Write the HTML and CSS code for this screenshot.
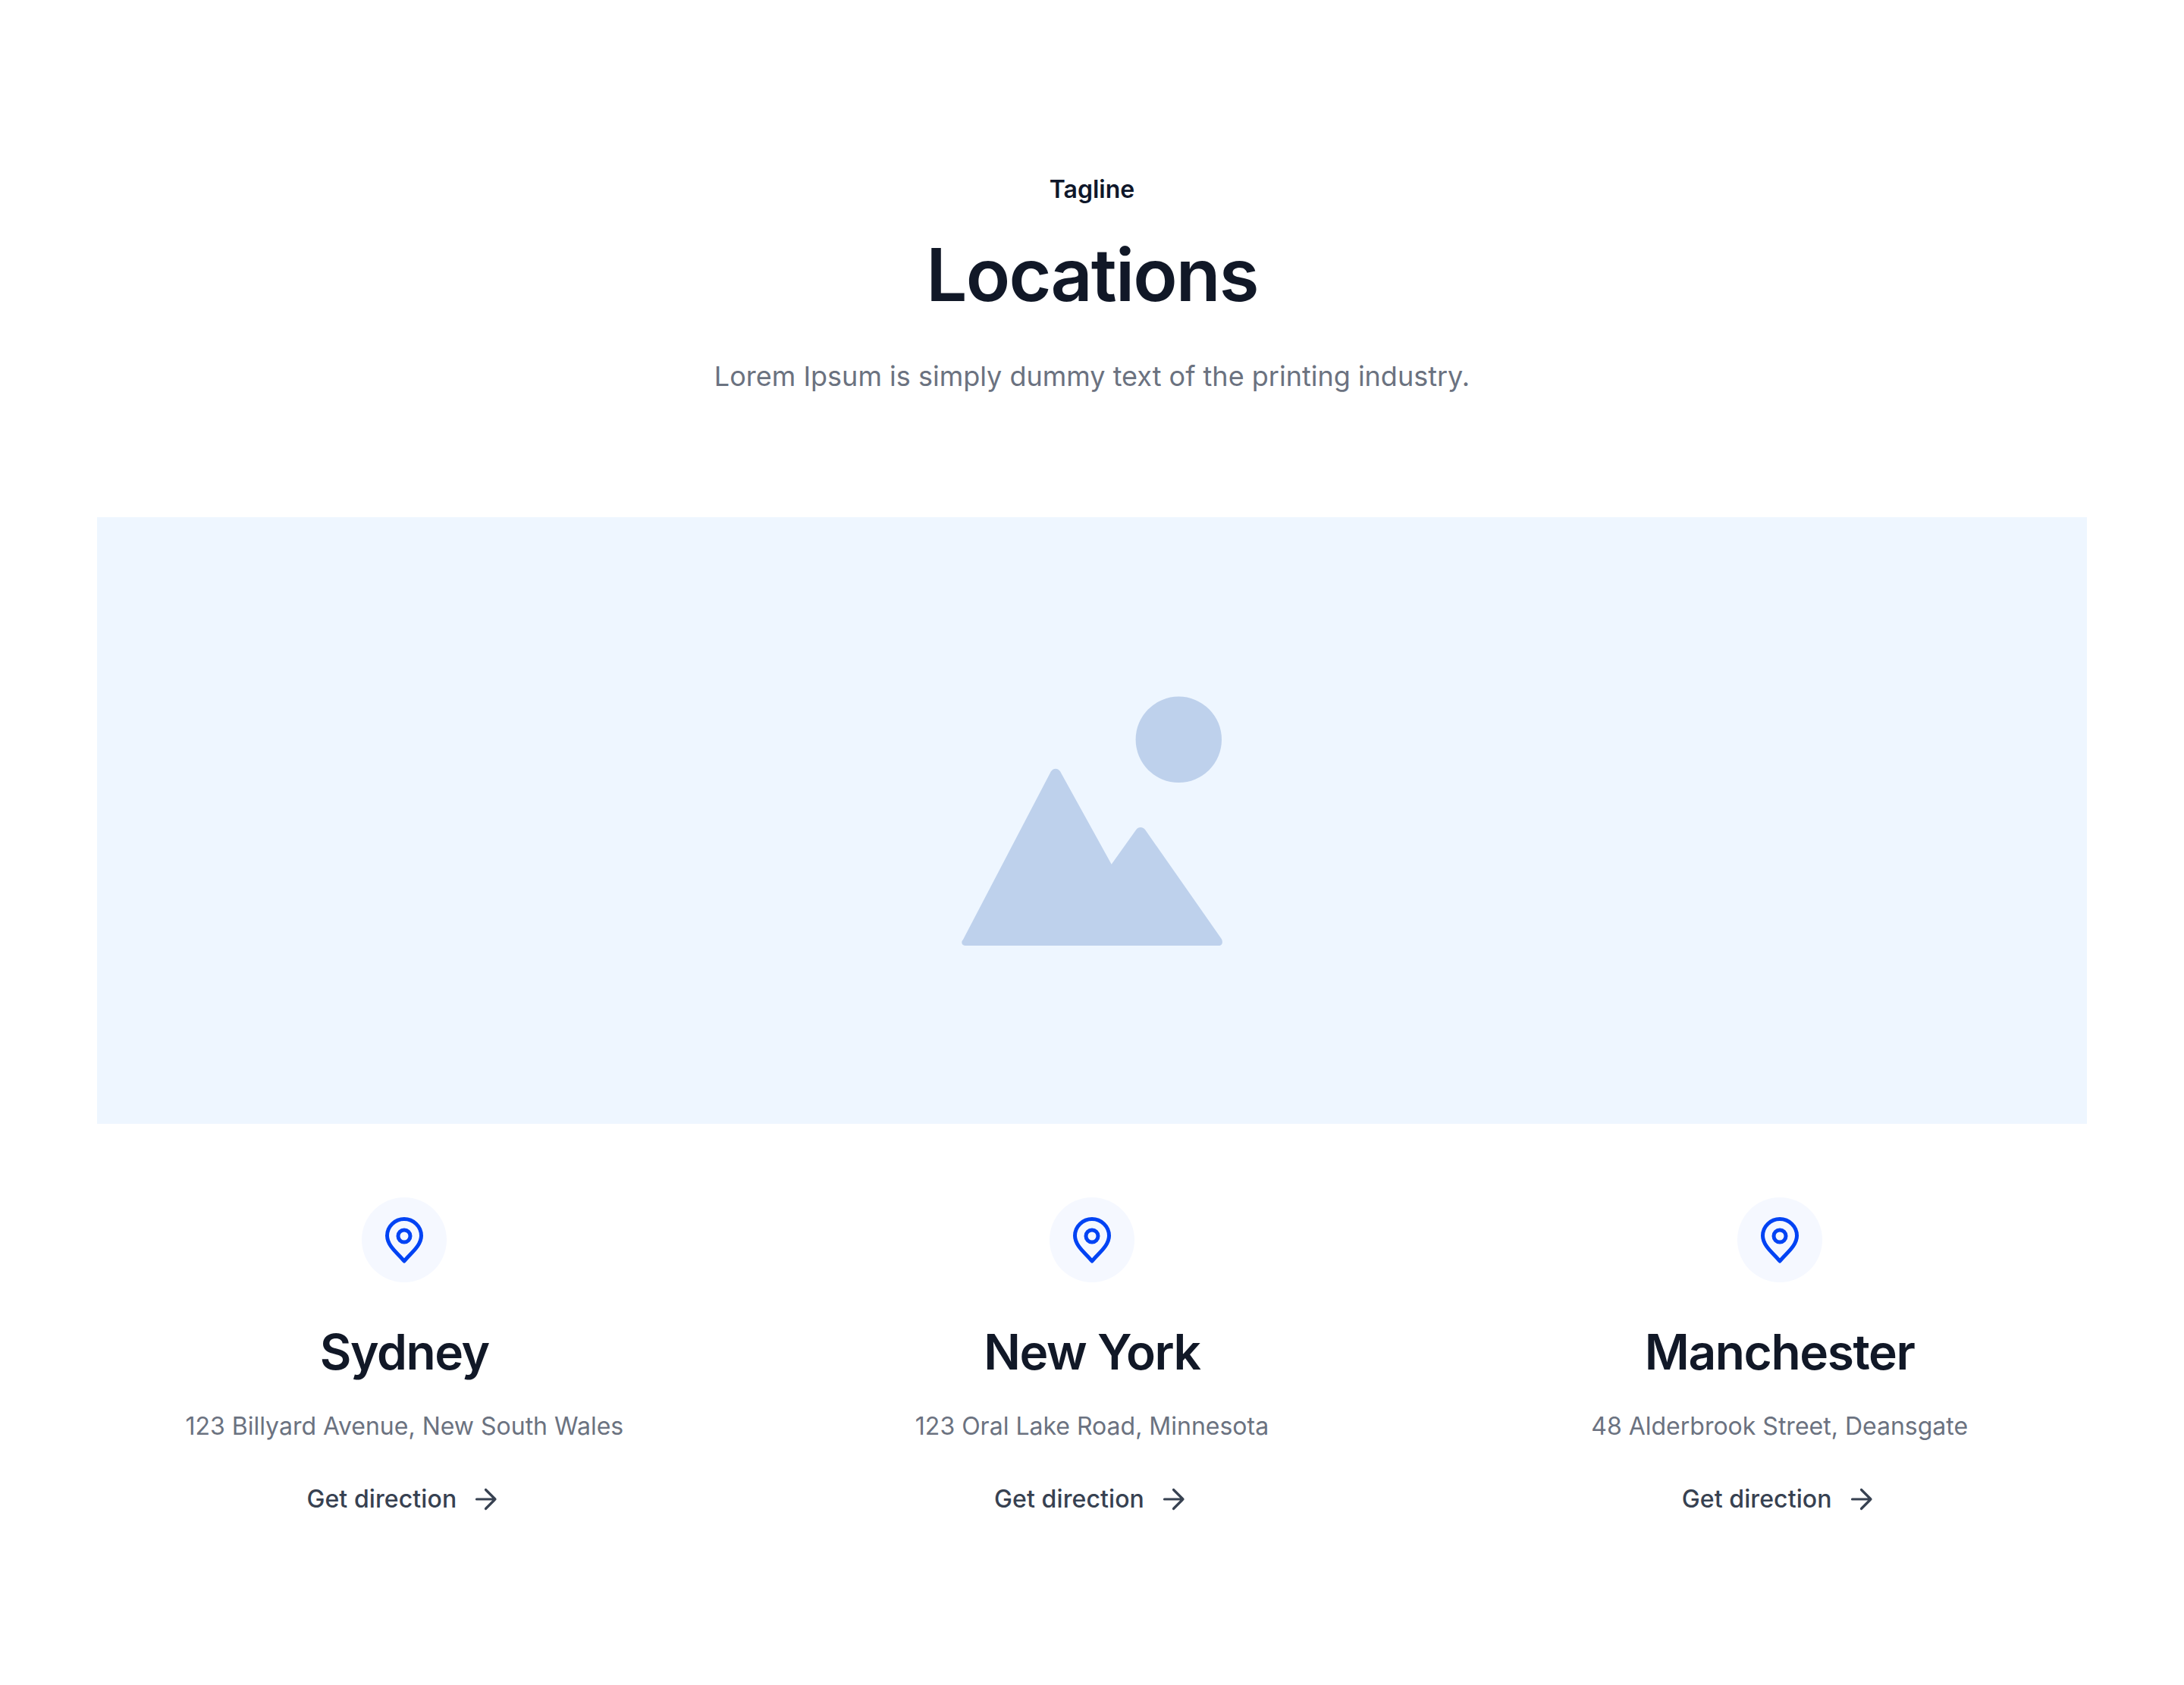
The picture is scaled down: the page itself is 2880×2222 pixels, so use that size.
FILE: index.html
```html
<!DOCTYPE html>
<html lang="en">
<head>
<meta charset="utf-8">
<title>Locations</title>
<link rel="stylesheet" href="styles.css">
</head>
<body>
<section class="locations">
  <header class="intro">
    <p class="tagline">Tagline</p>
    <h1 class="title">Locations</h1>
    <p class="lead">Lorem Ipsum is simply dummy text of the printing industry.</p>
  </header>
  <div class="map">
    <svg class="map-icon" viewBox="0 0 346 330" aria-hidden="true">
      <circle cx="287.3" cy="57.3" r="56.7"/>
      <path d="M3 321L118 101C121 94 129 94 132 101L198.7 221.7L231.3 176C234 172 240 172 243 176L343.7 320C346 324 345 329 340 329L6 329C1 329 0 324 3 321Z"/>
    </svg>
  </div>
  <div class="offices">
    <article class="office">
      <span class="pin">
        <svg viewBox="0 0 64 64" aria-hidden="true"><path d="M32 60C40 50 54.500 40 54.500 26.500C54.500 14.300 44.200 4.500 32 4.500C19.800 4.500 9.500 14.300 9.500 26.500C9.500 40 24 50 32 60Z"/><circle cx="32" cy="27" r="8"/></svg>
      </span>
      <h2 class="city">Sydney</h2>
      <p class="address">123 Billyard Avenue, New South Wales</p>
      <a class="direction" href="#">Get direction<svg viewBox="0 0 40 40" aria-hidden="true"><path d="M6.500 20H31M18.500 7.500L31 20L18.500 32.500"/></svg></a>
    </article>
    <article class="office">
      <span class="pin">
        <svg viewBox="0 0 64 64" aria-hidden="true"><path d="M32 60C40 50 54.500 40 54.500 26.500C54.500 14.300 44.200 4.500 32 4.500C19.800 4.500 9.500 14.300 9.500 26.500C9.500 40 24 50 32 60Z"/><circle cx="32" cy="27" r="8"/></svg>
      </span>
      <h2 class="city">New York</h2>
      <p class="address">123 Oral Lake Road, Minnesota</p>
      <a class="direction" href="#">Get direction<svg viewBox="0 0 40 40" aria-hidden="true"><path d="M6.500 20H31M18.500 7.500L31 20L18.500 32.500"/></svg></a>
    </article>
    <article class="office">
      <span class="pin">
        <svg viewBox="0 0 64 64" aria-hidden="true"><path d="M32 60C40 50 54.500 40 54.500 26.500C54.500 14.300 44.200 4.500 32 4.500C19.800 4.500 9.500 14.300 9.500 26.500C9.500 40 24 50 32 60Z"/><circle cx="32" cy="27" r="8"/></svg>
      </span>
      <h2 class="city">Manchester</h2>
      <p class="address">48 Alderbrook Street, Deansgate</p>
      <a class="direction" href="#">Get direction<svg viewBox="0 0 40 40" aria-hidden="true"><path d="M6.500 20H31M18.500 7.500L31 20L18.500 32.500"/></svg></a>
    </article>
  </div>
</section>
</body>
</html>
```
FILE: styles.css
```css
* { box-sizing: border-box; }
html, body { margin: 0; background: #fff; }
body { font-family: Inter, "Liberation Sans", sans-serif; color: #111827; }
p, h1, h2 { margin: 0; }

.locations { display: flex; flex-direction: column; padding: 226px 128px 192px; }

.intro { display: flex; flex-direction: column; align-items: center; text-align: center; margin-bottom: 158px; }
.tagline { font-size: 32px; line-height: 48px; font-weight: 600; color: #0f172a; }
.title { margin-top: 30px; font-size: 96px; line-height: 116px; font-weight: 600; letter-spacing: -1.8px; color: #111827; }
.lead { margin-top: 48px; font-size: 36px; line-height: 56px; color: #6b7280; }

.map { display: flex; align-items: center; justify-content: center; height: 800px; padding-top: 2px; background: #eef6ff; }
.map-icon { width: 346px; height: 330px; fill: #bed1ec; }

.offices { display: grid; grid-template-columns: repeat(3, 1fr); gap: 96px; padding-top: 97px; }
.office { display: flex; flex-direction: column; align-items: center; text-align: center; }
.pin { display: flex; align-items: center; justify-content: center; width: 112px; height: 112px; border-radius: 50%; background: #f5f8ff; }
.pin svg { width: 64px; height: 64px; fill: none; stroke: #0043f4; stroke-width: 5; stroke-linejoin: round; }
.city { margin-top: 50px; font-size: 64px; line-height: 84px; font-weight: 600; letter-spacing: -1.4px; color: #111827; }
.address { margin-top: 32px; font-size: 32px; line-height: 48px; color: #6b7280; }
.direction { display: flex; align-items: center; gap: 20px; margin-top: 48px; font-size: 32px; line-height: 48px; font-weight: 500; letter-spacing: 0.1px; color: #374151; text-decoration: none; }
.direction svg { width: 40px; height: 40px; fill: none; stroke: #374151; stroke-width: 3.2; stroke-linecap: round; stroke-linejoin: round; }
```
